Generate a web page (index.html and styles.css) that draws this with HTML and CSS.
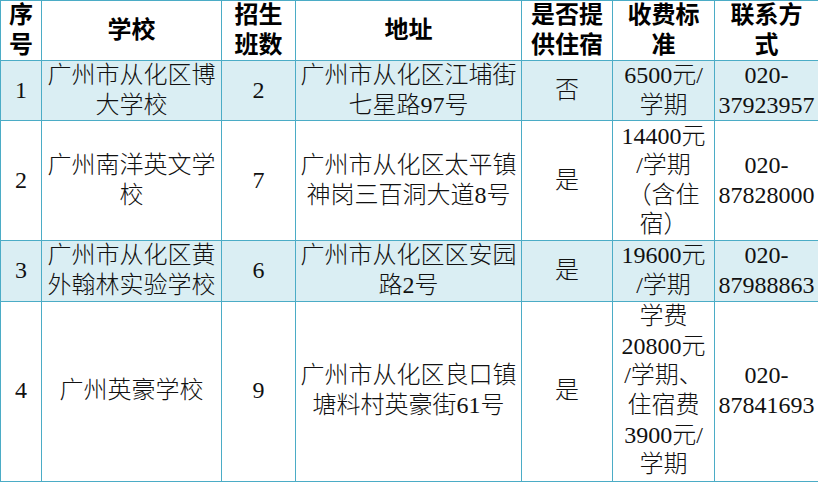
FILE: index.html
```html
<!DOCTYPE html>
<html lang="zh-CN">
<head>
<meta charset="utf-8">
<title>从化区民办学校</title>
<link rel="stylesheet" href="styles.css">
</head>
<body>
<table class="sheet">
  <colgroup>
    <col class="c-no">
    <col class="c-school">
    <col class="c-class">
    <col class="c-addr">
    <col class="c-dorm">
    <col class="c-fee">
    <col class="c-tel">
  </colgroup>
  <thead>
    <tr class="r2">
      <th>序<br>号</th>
      <th>学校</th>
      <th>招生<br>班数</th>
      <th>地址</th>
      <th>是否提<br>供住宿</th>
      <th>收费标<br>准</th>
      <th>联系方<br>式</th>
    </tr>
  </thead>
  <tbody>
    <tr class="r2 shade">
      <td>1</td>
      <td>广州市从化区博<br>大学校</td>
      <td>2</td>
      <td>广州市从化区江埔街<br>七星路97号</td>
      <td>否</td>
      <td>6500元/<br>学期</td>
      <td>020-<br>37923957</td>
    </tr>
    <tr class="r4">
      <td>2</td>
      <td>广州南洋英文学<br>校</td>
      <td>7</td>
      <td>广州市从化区太平镇<br>神岗三百洞大道8号</td>
      <td>是</td>
      <td>14400元<br>/学期<br>（含住<br>宿）</td>
      <td>020-<br>87828000</td>
    </tr>
    <tr class="r2 shade">
      <td>3</td>
      <td>广州市从化区黄<br>外翰林实验学校</td>
      <td>6</td>
      <td>广州市从化区区安园<br>路2号</td>
      <td>是</td>
      <td>19600元<br>/学期</td>
      <td>020-<br>87988863</td>
    </tr>
    <tr class="r6">
      <td>4</td>
      <td>广州英豪学校</td>
      <td>9</td>
      <td>广州市从化区良口镇<br>塘料村英豪街61号</td>
      <td>是</td>
      <td>学费<br>20800元<br>/学期、<br>住宿费<br>3900元/<br>学期</td>
      <td>020-<br>87841693</td>
    </tr>
  </tbody>
</table>
</body>
</html>
```
FILE: styles.css
```css
html, body {
  margin: 0;
  padding: 0;
  background: #ffffff;
}

.sheet {
  border-collapse: collapse;
  table-layout: fixed;
  width: 818px;
  font-family: "Liberation Serif", "Noto Sans CJK SC", serif;
  font-size: 24px;
  line-height: 29.6px;
  color: #000000;
}

.c-no { width: 41px; }
.c-school { width: 180px; }
.c-class { width: 74px; }
.c-addr { width: 226px; }
.c-dorm { width: 91px; }
.c-fee { width: 102px; }
.c-tel { width: 104px; }

.sheet th,
.sheet td {
  border: 1px solid #4bacc6;
  padding: 0;
  text-align: center;
  vertical-align: middle;
  white-space: nowrap;
  overflow: hidden;
}

.sheet th {
  font-weight: bold;
}

.sheet td {
  font-weight: 300;
  color: #111111;
}

.r2 { height: 60px; }
.r4 { height: 120px; }
.r6 { height: 180px; }

.shade td {
  background: #daeef3;
}
```
